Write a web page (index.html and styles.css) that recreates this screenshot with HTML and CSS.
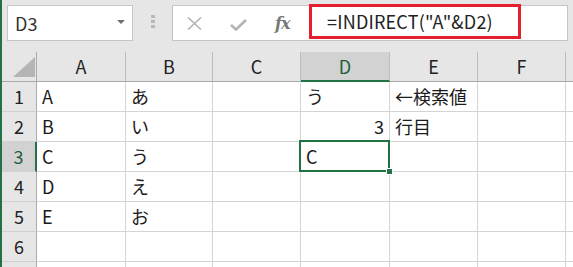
FILE: index.html
```html
<!DOCTYPE html>
<html>
<head>
    <title>INDIRECT</title>
    <link rel="stylesheet" href="styles.css">
</head>
<body>
    <div class="app">
        <div class="toolbar">
            <div class="namebox">
                <span>D3</span>
                <svg class="drop" width="8" height="4" viewBox="0 0 8 4"><polygon points="0,0 8,0 4,4" fill="#707070"/></svg>
            </div>
            <div class="grip"><i></i><i></i><i></i></div>
            <div class="formulabar">
                <div class="buttons">
                    <svg class="btn-x" width="15" height="13" viewBox="0 0 15 13"><path d="M1 0.5 L14 12.5 M14 0.5 L1 12.5" stroke="#b4b4b4" stroke-width="1.6" fill="none"/></svg>
                    <svg class="btn-ok" width="17" height="12" viewBox="0 0 17 12"><path d="M1 6 L6 10.5 L16 1" stroke="#b4b4b4" stroke-width="2.6" fill="none"/></svg>
                    <span class="fx">fx</span>
                </div>
                <div class="formula">=INDIRECT("A"&amp;D2)</div>
            </div>
        </div>

        <div class="sheet">
            <div class="corner"><svg width="22" height="20" viewBox="0 0 22 20"><polygon points="22,0 22,20 0,20" fill="#b5b5b5"/></svg></div>
            <div class="colhead">A</div>
            <div class="colhead">B</div>
            <div class="colhead">C</div>
            <div class="colhead selected">D</div>
            <div class="colhead">E</div>
            <div class="colhead">F</div>
            <div class="colhead"></div>

            <div class="rowhead">1</div>
            <div class="cell">A</div>
            <div class="cell">あ</div>
            <div class="cell"></div>
            <div class="cell">う</div>
            <div class="cell">←検索値</div>
            <div class="cell"></div>
            <div class="cell"></div>

            <div class="rowhead">2</div>
            <div class="cell">B</div>
            <div class="cell">い</div>
            <div class="cell"></div>
            <div class="cell num">3</div>
            <div class="cell">行目</div>
            <div class="cell"></div>
            <div class="cell"></div>

            <div class="rowhead selected">3</div>
            <div class="cell">C</div>
            <div class="cell">う</div>
            <div class="cell"></div>
            <div class="cell active">C</div>
            <div class="cell"></div>
            <div class="cell"></div>
            <div class="cell"></div>

            <div class="rowhead">4</div>
            <div class="cell">D</div>
            <div class="cell">え</div>
            <div class="cell"></div>
            <div class="cell"></div>
            <div class="cell"></div>
            <div class="cell"></div>
            <div class="cell"></div>

            <div class="rowhead">5</div>
            <div class="cell">E</div>
            <div class="cell">お</div>
            <div class="cell"></div>
            <div class="cell"></div>
            <div class="cell"></div>
            <div class="cell"></div>
            <div class="cell"></div>

            <div class="rowhead">6</div>
            <div class="cell"></div>
            <div class="cell"></div>
            <div class="cell"></div>
            <div class="cell"></div>
            <div class="cell"></div>
            <div class="cell"></div>
            <div class="cell"></div>

            <!-- row 7, only its top edge shows -->
            <div class="rowhead"></div>
            <div class="cell"></div>
            <div class="cell"></div>
            <div class="cell"></div>
            <div class="cell"></div>
            <div class="cell"></div>
            <div class="cell"></div>
            <div class="cell"></div>
        </div>
    </div>
</body>
</html>
```

FILE: styles.css
```css
html, body {
    margin: 0;
    height: 100%;
    overflow: hidden;
}

body {
    background-color: #e6e6e6;
    font-family: "Noto Sans CJK JP", "Noto Sans", sans-serif;
    font-size: 18px;
    color: #1a1a1a;
}

.app {
    border-left: 2px solid #217346;
    height: 100%;
    box-sizing: border-box;
}

.toolbar {
    display: flex;
    align-items: flex-start;
    height: 52px;
    padding-left: 5px;
    padding-top: 5px;
    box-sizing: border-box;
}

.namebox {
    width: 126px;
    height: 36px;
    box-sizing: border-box;
    background-color: white;
    border: 1px solid #c6c6c6;
    display: flex;
    align-items: center;
    justify-content: space-between;
    padding: 0 7px 0 7px;
    color: #333;
}

    .namebox .drop {
        margin-top: -3px;
    }

.grip {
    display: flex;
    flex-direction: column;
    gap: 2px;
    margin: 10px 17px 0 18px;
}

    .grip i {
        display: block;
        width: 4px;
        height: 3px;
        background-color: #b8b8b8;
    }

.formulabar {
    width: 396px;
    height: 36px;
    box-sizing: border-box;
    background-color: white;
    border: 1px solid #c6c6c6;
    display: flex;
    align-items: flex-start;
}

.buttons {
    width: 136px;
    height: 34px;
    display: flex;
    align-items: center;
}

    .buttons .btn-x {
        margin-left: 14px;
    }

    .buttons .btn-ok {
        margin-left: 28px;
        margin-top: 3px;
    }

    .buttons .fx {
        margin-left: 28px;
        font-family: "DejaVu Serif", "Liberation Serif", serif;
        font-style: italic;
        font-weight: bold;
        font-size: 16px;
        color: #777;
        letter-spacing: -1px;
    }

.formula {
    margin-top: -2px;
    width: 212px;
    height: 35px;
    box-sizing: border-box;
    border: 3px solid #e5202e;
    padding-left: 15px;
    line-height: 29px;
    color: #222;
    letter-spacing: 0.2px;
    white-space: nowrap;
}

.sheet {
    display: grid;
    grid-template-columns: 35px 89px 87px 88px 89px 88px 88px 1fr;
    grid-auto-rows: 30px;
    background-color: white;
}

.corner, .colhead, .rowhead {
    background-color: #e6e6e6;
    box-sizing: border-box;
    text-align: center;
    color: #222;
}

.corner {
    border-right: 1px solid #ababab;
    border-bottom: 1px solid #ababab;
    display: flex;
    align-items: flex-end;
    justify-content: flex-end;
    padding: 0 1px 4px 0;
}

.colhead {
    border-right: 1px solid #bdbdbd;
    border-bottom: 1px solid #a6a6a6;
    line-height: 29px;
}

    .colhead.selected {
        background-color: #d2d2d2;
        border-bottom: 2px solid #217346;
        color: #1e5f3a;
    }

.rowhead {
    border-right: 1px solid #ababab;
    border-bottom: 1px solid #d0d0d0;
    line-height: 29px;
}

    .rowhead.selected {
        background-color: #d2d2d2;
        border-right: 2px solid #217346;
        color: #1e5f3a;
    }

.cell {
    box-sizing: border-box;
    border-right: 1px solid #d4d4d4;
    border-bottom: 1px solid #d4d4d4;
    padding: 0 5px;
    line-height: 29px;
    white-space: nowrap;
}

    .cell.num {
        text-align: right;
    }

    .cell.active {
        position: relative;
    }

        .cell.active::before {
            content: "";
            position: absolute;
            top: -2px;
            left: -2px;
            right: -1px;
            bottom: -1px;
            border: 2px solid #217346;
        }

        .cell.active::after {
            content: "";
            position: absolute;
            right: -4px;
            bottom: -4px;
            width: 5px;
            height: 5px;
            background-color: #217346;
            border: 1px solid white;
            z-index: 1;
        }
```
